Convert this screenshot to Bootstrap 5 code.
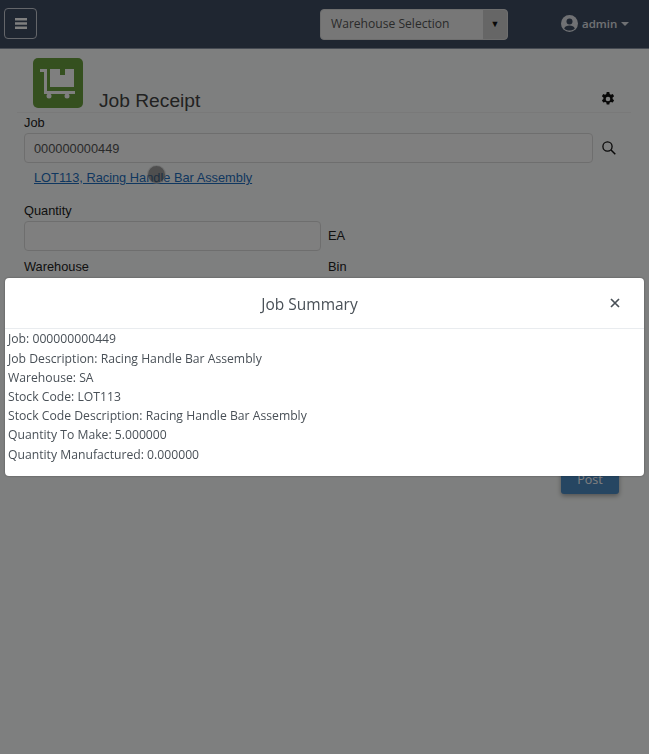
<!DOCTYPE html>
<html lang="en">
<head>
    <meta charset="UTF-8">
    <meta name="viewport" content="width=device-width, initial-scale=1.0">
    <title>Job Receipt</title>
    <link href="https://cdn.jsdelivr.net/npm/bootstrap@5.3.3/dist/css/bootstrap.min.css" rel="stylesheet">
    <style>
        body {
            font-family: "Liberation Sans", Arial, sans-serif;
            font-size: 12.8px;
            color: #222;
            background: #fdfffe;
            height: 754px;
            overflow: hidden;
        }

        .top-bar {
            height: 49px;
            background: #3e4c63;
            border-bottom: 1px solid #8c96a6;
            padding: 0 4px;
        }

        .menu-btn {
            width: 33px;
            height: 31px;
            margin-top: -2px;
            border: 1px solid #c8ccd4;
            border-radius: 4px;
            background: transparent;
            color: #fff;
            padding: 0;
        }

        .wh-select {
            width: 188px;
            height: 31px;
            margin-left: 283px;
            border-radius: 4px;
            border: 1px solid #ddd;
            background: #eee;
            overflow: hidden;
            font-family: "Open Sans", sans-serif;
            font-size: 12.1px;
            color: #555;
        }

        .wh-select .wh-text {
            flex: 1;
            padding-left: 10px;
        }

        .wh-select .wh-arrow {
            width: 24px;
            background: #ccc;
            color: #111;
            font-size: 9px;
        }

        .user-menu {
            margin-left: 53px;
            margin-top: -1px;
            color: #e0e3e8;
            font-family: "Open Sans", sans-serif;
            font-size: 11.5px;
            font-weight: 600;
        }

        .user-menu .caret {
            width: 0;
            height: 0;
            border-left: 4px solid transparent;
            border-right: 4px solid transparent;
            border-top: 4px solid #e0e3e8;
        }

        .page-body {
            padding: 9px 18px 0 24px;
        }

        .title-row {
            margin-left: -7px;
            height: 55px;
            border-bottom: 1px solid #f2f2f2;
            padding-left: 16px;
        }

        .app-icon {
            width: 50px;
            height: 50px;
            border-radius: 5px;
            background: #6ba03f;
        }

        .title-text {
            font-size: 19.2px;
            font-weight: 400;
            line-height: 23px;
            margin: 0 0 0 16px;
            color: #444;
        }

        .title-gear {
            margin-left: auto;
            margin-right: 16px;
            margin-bottom: 6px;
        }

        .job-label {
            display: block;
            line-height: 16px;
            margin: 2px 0;
        }

        .qty-label {
            margin: 0 0 2px;
        }

        .job-input {
            height: 30px;
            border: 1px solid #ddd;
            border-radius: 4px;
            background: #fff;
            color: #555;
            font-size: 12.8px;
            padding: 0 9px;
            box-shadow: none;
        }

        .job-input:focus {
            border-color: #ddd;
            box-shadow: none;
        }

        .wide-field { width: 569px; }
        .half-field { width: 297px; }

        .search-icon {
            margin-left: 9px;
            margin-top: -1px;
        }

        .job-link {
            display: block;
            margin: 6px 0 17px 10px;
            line-height: 17px;
            color: #1f6fc0;
        }

        .unit-text {
            margin-left: 7px;
        }

        .loc-row {
            margin-top: 6px;
        }

        .col-half {
            width: 304px;
        }

        .post-btn {
            position: absolute;
            left: 561px;
            top: 466px;
            width: 58px;
            height: 28px;
            background: #4d8cc4;
            border: 0;
            border-radius: 3px;
            color: #fff;
            font-family: "Open Sans", sans-serif;
            font-size: 12.5px;
            padding: 0;
            box-shadow: 0 2px 5px rgba(0, 0, 0, .35);
        }

        .busy-dot {
            position: absolute;
            left: 147px;
            top: 165px;
            width: 19px;
            height: 19px;
            border-radius: 50%;
            background: rgba(40, 40, 40, .55);
            border: 1px solid rgba(255, 255, 255, .2);
            z-index: 1055;
        }

        .modal-backdrop.show {
            opacity: .5;
        }

        .summary-modal {
            left: 5px;
            top: 278px;
            width: 639px;
            height: 198px;
            overflow: hidden;
            background: #fff;
            border-radius: 4px;
            box-shadow: 0 0 2px rgba(0, 0, 0, .4);
            font-family: "Open Sans", sans-serif;
            color: #495057;
            z-index: 1060;
        }

        .summary-head {
            height: 51px;
            border-bottom: 1px solid #e9ecef;
            position: relative;
        }

        .summary-title {
            font-size: 15.5px;
            font-weight: 400;
            line-height: 53px;
            margin: 0;
            text-align: center;
            padding-right: 30px;
        }

        .summary-close {
            position: absolute;
            right: 23px;
            top: 19px;
            width: 12px;
            height: 12px;
            padding: 0;
            border: 0;
            background: transparent;
            line-height: 0;
        }

        .summary-body {
            padding: .4px 3px 0;
            font-size: 12.2px;
        }

        .summary-body div {
            height: 19.2px;
            line-height: 19.2px;
        }
    </style>
</head>
<body>
    <!-- Top bar -->
    <div class="top-bar d-flex align-items-center">
        <button class="menu-btn d-flex align-items-center justify-content-center" type="button" aria-label="Menu">
            <svg width="12" height="11" viewBox="0 0 12 11"><path d="M0 0h12v2.400H0zM0 4.300h12v2.400H0zM0 8.600h12V11H0z" fill="#fff"/></svg>
        </button>
        <div class="wh-select d-flex align-items-stretch">
            <span class="wh-text d-flex align-items-center">Warehouse Selection</span>
            <span class="wh-arrow d-flex align-items-center justify-content-center">&#9660;</span>
        </div>
        <div class="user-menu d-flex align-items-center">
            <svg class="me-1" width="17" height="17" viewBox="0 0 17 17"><circle cx="8.500" cy="8.500" r="8.500" fill="#e0e3e8"/><circle cx="8.500" cy="6.600" r="3" fill="#3e4c63"/><path d="M3.200 13.400c.8-2.200 2.800-3 5.300-3s4.500.8 5.300 3c-1.300 1.300-3.200 2.100-5.300 2.100s-4-.8-5.300-2.100z" fill="#3e4c63"/></svg>
            <span>admin</span>
            <span class="caret ms-1"></span>
        </div>
    </div>

    <div class="page-body">
        <div class="title-row d-flex align-items-end">
            <div class="app-icon mb-1">
                <svg class="d-block" width="50" height="50" viewBox="0 0 50 50"><path d="M7 11h7v22h28v3H11V14H7z" fill="#fff"/><circle cx="16" cy="38" r="2.500" fill="#fff"/><circle cx="34" cy="38" r="2.500" fill="#fff"/><path d="M17 11h10v6h5v-6h9v18H17z" fill="#fff"/></svg>
            </div>
            <h1 class="title-text">Job Receipt</h1>
            <svg class="title-gear" width="14" height="14" viewBox="0 0 14 14"><path fill="#111" fill-rule="evenodd" d="M5.700 0h2.600l.4 2 1.200.7 1.900-.7 1.300 2.300-1.500 1.300v1.400l1.500 1.300-1.300 2.300-1.900-.7-1.200.7-.4 2H5.700l-.4-2-1.200-.7-1.900.7L.9 8.300l1.500-1.300V5.600L.9 4.300l1.300-2.300 1.900.7 1.200-.7zM7 4.700a2.300 2.300 0 1 0 0 4.600 2.300 2.300 0 0 0 0-4.600z"/></svg>
        </div>

        <label class="job-label" for="jobNo">Job</label>
        <div class="d-flex align-items-center">
            <input class="form-control job-input wide-field" id="jobNo" value="000000000449">
            <svg class="search-icon" width="14" height="14" viewBox="0 0 14 14"><circle cx="5.500" cy="5.500" r="4.600" fill="none" stroke="#111" stroke-width="1.300"/><path d="M9 9L13.300 13.300" stroke="#111" stroke-width="1.500"/></svg>
        </div>
        <a class="job-link" href="#">LOT113, Racing Handle Bar Assembly</a>

        <label class="job-label qty-label" for="qty">Quantity</label>
        <div class="d-flex align-items-center">
            <input class="form-control job-input half-field" id="qty">
            <span class="unit-text">EA</span>
        </div>

        <div class="d-flex loc-row">
            <div class="col-half"><span class="job-label">Warehouse</span></div>
            <div><span class="job-label">Bin</span></div>
        </div>
    </div>

    <button class="post-btn" type="button">Post</button>

    <div class="modal-backdrop show"></div>
    <div class="busy-dot"></div>

    <!-- Job summary dialog -->
    <div class="summary-modal position-absolute">
        <div class="summary-head">
            <h5 class="summary-title">Job Summary</h5>
            <button class="summary-close" type="button" aria-label="Close">
                <svg width="10" height="10" viewBox="0 0 10 10"><path d="M1 1l8 8M9 1l-8 8" stroke="#495057" stroke-width="1.700"/></svg>
            </button>
        </div>
        <div class="summary-body">
            <div>Job: 000000000449</div>
            <div>Job Description: Racing Handle Bar Assembly</div>
            <div>Warehouse: SA</div>
            <div>Stock Code: LOT113</div>
            <div>Stock Code Description: Racing Handle Bar Assembly</div>
            <div>Quantity To Make: 5.000000</div>
            <div>Quantity Manufactured: 0.000000</div>
        </div>
    </div>

    <script src="https://cdn.jsdelivr.net/npm/bootstrap@5.3.3/dist/js/bootstrap.bundle.min.js"></script>
</body>
</html>
